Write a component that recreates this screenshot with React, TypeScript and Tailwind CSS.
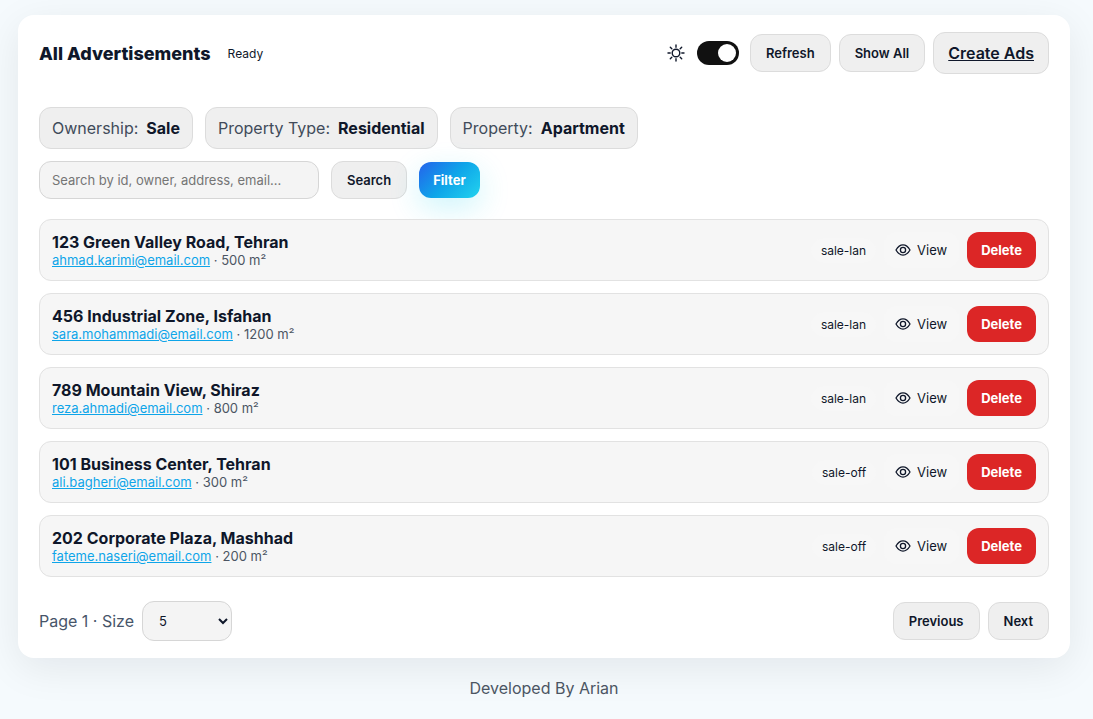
import { useState } from "react";

const ads = [
  { title: "123 Green Valley Road, Tehran", email: "ahmad.karimi@email.com", area: 500, kind: "sale-lan" },
  { title: "456 Industrial Zone, Isfahan", email: "sara.mohammadi@email.com", area: 1200, kind: "sale-lan" },
  { title: "789 Mountain View, Shiraz", email: "reza.ahmadi@email.com", area: 800, kind: "sale-lan" },
  { title: "101 Business Center, Tehran", email: "ali.bagheri@email.com", area: 300, kind: "sale-off" },
  { title: "202 Corporate Plaza, Mashhad", email: "fateme.naseri@email.com", area: 200, kind: "sale-off" },
];

const filters = [
  { label: "Ownership:", value: "Sale" },
  { label: "Property Type:", value: "Residential" },
  { label: "Property:", value: "Apartment" },
];

const buttonClass =
  "h-[38px] rounded-xl border border-[#dcdcdc] bg-[#efefef] px-[15px] text-[13px] leading-4 font-semibold";

function SunIcon() {
  return (
    <svg
      viewBox="0 0 18 18"
      className="size-[18px]"
      fill="none"
      stroke="currentColor"
      strokeWidth="1.4"
      strokeLinecap="round"
      aria-hidden="true"
    >
      <circle cx="9" cy="9" r="3.8" />
      <path d="M9 1v2.2M9 14.8V17M1 9h2.2M14.8 9H17M3.3 3.3l1.5 1.5M13.2 13.2l1.5 1.5M3.3 14.7l1.5-1.5M13.2 4.8l1.5-1.5" />
    </svg>
  );
}

function EyeIcon() {
  return (
    <svg
      viewBox="0 0 16 16"
      className="size-4"
      fill="none"
      stroke="currentColor"
      strokeWidth="1.3"
      strokeLinejoin="round"
      aria-hidden="true"
    >
      <path d="M1 8C2.8 4.9 5.2 2.9 8 2.9S13.200 4.900 15 8C13.200 11.100 10.800 13.100 8 13.100S2.800 11.100 1 8Z" />
      <circle cx="8" cy="8" r="2.6" />
    </svg>
  );
}

export default function App() {
  const [light, setLight] = useState(true);
  const [size, setSize] = useState("5");

  return (
    <div className="min-h-screen bg-[#f5fafd] pt-[15px] pr-[23px] pb-5 pl-[18px] font-['Inter',sans-serif] text-base text-[#0f172a]">
      <main className="rounded-2xl bg-white px-[21px] py-[17px] shadow-[0_10px_40px_rgba(2,6,23,0.08)]">
        <header className="flex items-center justify-between">
          <div className="flex items-center gap-[17px]">
            <h1 className="text-lg leading-[23px] font-extrabold">All Advertisements</h1>
            <span className="text-xs leading-[19px]">Ready</span>
          </div>
          <div className="flex items-center gap-2">
            <div className="mr-[3px] flex items-center gap-3">
              <SunIcon />
              <label className="relative h-6 w-[42px] cursor-pointer">
                <input
                  type="checkbox"
                  aria-label="Light theme"
                  checked={light}
                  onChange={(e) => setLight(e.target.checked)}
                  className="peer block h-6 w-[42px] appearance-none rounded-full bg-[#111111]"
                />
                <span className="pointer-events-none absolute top-[3px] left-[3px] size-[18px] rounded-full bg-white peer-checked:left-[21px]" />
              </label>
            </div>
            <button className={buttonClass}>Refresh</button>
            <button className={buttonClass}>Show All</button>
            <a
              href="#create"
              className="flex h-[42px] items-center rounded-xl border border-[#dcdcdc] bg-[#efefef] px-3.5 font-semibold underline"
            >
              Create Ads
            </a>
          </div>
        </header>

        <section className="mt-[33px] flex flex-wrap gap-3" aria-label="Active filters">
          {filters.map((f) => (
            <div
              key={f.label}
              className="flex h-[42px] items-center gap-2 rounded-xl border border-[#dcdcdc] bg-[#efefef] px-3"
            >
              <span className="text-[#414b5a]">{f.label}</span>
              <strong className="font-bold">{f.value}</strong>
            </div>
          ))}
        </section>

        <form className="mt-3 flex items-center gap-3" onSubmit={(e) => e.preventDefault()}>
          <input
            type="text"
            aria-label="Search advertisements"
            placeholder="Search by id, owner, address, email..."
            className="h-[38px] w-[280px] rounded-xl border border-[#d6d6d6] bg-[#f4f4f4] px-3 text-[13px] placeholder:text-[#757575]"
          />
          <button className={buttonClass}>Search</button>
          <button
            type="button"
            className="h-9 rounded-xl bg-[linear-gradient(135deg,#2563eb,#0ea5e9_50%,#22d3ee)] px-3.5 text-[13px] leading-4 font-bold text-white shadow-[0_10px_30px_rgba(34,211,238,0.22)]"
          >
            Filter
          </button>
        </form>

        <ul className="mt-5 flex flex-col gap-3">
          {ads.map((ad) => (
            <li
              key={ad.email}
              className="flex items-center justify-between rounded-xl border border-[#e2e2e2] bg-[#f6f6f6]/95 p-3"
            >
              <div>
                <h2 className="text-base leading-5 font-bold">{ad.title}</h2>
                <p className="text-[13px] leading-4 text-[#4b5563]">
                  <a href={`mailto:${ad.email}`} className="text-[#0ea5e9] underline">
                    {ad.email}
                  </a>{" "}
                  · {ad.area} m²
                </p>
              </div>
              <div className="flex items-center gap-2">
                <span className="rounded-full bg-[#f7f7f7] px-2.5 py-1 text-xs leading-[17px]">{ad.kind}</span>
                <button className="flex h-9 items-center gap-1.5 rounded-xl bg-[#f7f7f7] pr-3 pl-[11px] text-[13px] leading-4">
                  <EyeIcon />
                  View
                </button>
                <button className="h-9 rounded-xl bg-[#dc2626] px-3.5 text-[13px] leading-4 font-bold text-white">
                  Delete
                </button>
              </div>
            </li>
          ))}
        </ul>

        <nav className="mt-6 flex items-center justify-between" aria-label="Pagination">
          <label className="flex items-center gap-2 leading-[22px] text-[#475569]">
            Page 1 · Size
            <select
              value={size}
              onChange={(e) => setSize(e.target.value)}
              className="h-10 w-[90px] rounded-xl border border-[#d6d6d6] bg-[#f4f4f4] px-3 text-[13px] text-[#0f172a]"
            >
              <option>5</option>
              <option>10</option>
              <option>20</option>
            </select>
          </label>
          <div className="flex items-center gap-2">
            <button className={buttonClass}>Previous</button>
            <button className={buttonClass}>Next</button>
          </div>
        </nav>
      </main>
      <footer className="mt-[18px] text-center text-[#4b5563]">Developed By Arian</footer>
    </div>
  );
}
